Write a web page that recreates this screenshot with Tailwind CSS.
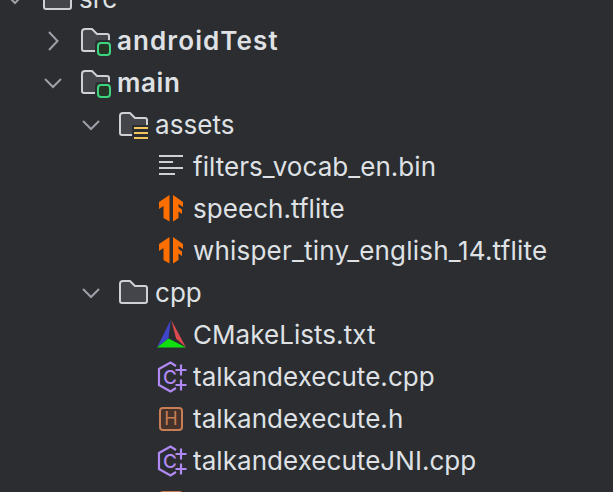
<!DOCTYPE html>
<html lang="en">
<head>
  <meta charset="UTF-8" />
  <title>Project tree</title>
  <script src="https://cdn.jsdelivr.net/npm/@tailwindcss/browser@4"></script>
</head>
<body class="bg-[#2b2d30] h-[492px] overflow-hidden font-['Inter',sans-serif] text-[26px] tracking-[0.05px] text-[#dfe1e5]">

  <div class="-mt-[22px] h-[514px]">

    <!-- src -->
    <div class="flex items-center h-[42px] pl-[3px]">
      <svg class="w-6 h-6 shrink-0 mr-[14px]" viewBox="0 0 24 24" fill="none" stroke="#9da0a8" stroke-width="2"><path d="M4 8l8 8 8-8"/></svg>
      <svg class="w-8 h-8 shrink-0" viewBox="0 0 32 32" fill="#43454a" stroke="#ced0d6" stroke-width="2" stroke-linejoin="round"><path d="M3 7a3 3 0 0 1 3-3h7l5 5h10a2 2 0 0 1 2 2v13a2 2 0 0 1-2 2H5a2 2 0 0 1-2-2z"/></svg>
      <span class="ml-[6px] mb-[2px]">src</span>
    </div>

    <!-- androidTest -->
    <div class="flex items-center h-[42px] pl-[41px]">
      <svg class="w-6 h-6 shrink-0 mr-[14px]" viewBox="0 0 24 24" fill="none" stroke="#9da0a8" stroke-width="2"><path d="M8 3l8.500 9L8 21"/></svg>
      <svg class="w-8 h-8 shrink-0" viewBox="0 0 32 32"><path fill="#43454a" stroke="#ced0d6" stroke-width="2" stroke-linejoin="round" d="M3 7a3 3 0 0 1 3-3h7l5 5h10a2 2 0 0 1 2 2v13a2 2 0 0 1-2 2H5a2 2 0 0 1-2-2z"/><rect x="16" y="15" width="17" height="17" rx="4" fill="#2b2d30"/><rect x="19" y="18" width="12" height="12" rx="3" fill="#253627" stroke="#3dd67f" stroke-width="2"/></svg>
      <span class="ml-[6px] mb-[2px] font-semibold tracking-[1.1px]">androidTest</span>
    </div>

    <!-- main -->
    <div class="flex items-center h-[42px] pl-[41px]">
      <svg class="w-6 h-6 shrink-0 mr-[14px]" viewBox="0 0 24 24" fill="none" stroke="#9da0a8" stroke-width="2"><path d="M4 8l8 8 8-8"/></svg>
      <svg class="w-8 h-8 shrink-0" viewBox="0 0 32 32"><path fill="#43454a" stroke="#ced0d6" stroke-width="2" stroke-linejoin="round" d="M3 7a3 3 0 0 1 3-3h7l5 5h10a2 2 0 0 1 2 2v13a2 2 0 0 1-2 2H5a2 2 0 0 1-2-2z"/><rect x="16" y="15" width="17" height="17" rx="4" fill="#2b2d30"/><rect x="19" y="18" width="12" height="12" rx="3" fill="#253627" stroke="#3dd67f" stroke-width="2"/></svg>
      <span class="ml-[6px] mb-[2px] font-semibold tracking-[0.6px]">main</span>
    </div>

    <!-- assets -->
    <div class="flex items-center h-[42px] pl-[79px]">
      <svg class="w-6 h-6 shrink-0 mr-[14px]" viewBox="0 0 24 24" fill="none" stroke="#9da0a8" stroke-width="2"><path d="M4 8l8 8 8-8"/></svg>
      <svg class="w-8 h-8 shrink-0" viewBox="0 0 32 32"><path fill="#43454a" stroke="#ced0d6" stroke-width="2" stroke-linejoin="round" d="M3 7a3 3 0 0 1 3-3h7l5 5h10a2 2 0 0 1 2 2v13a2 2 0 0 1-2 2H5a2 2 0 0 1-2-2z"/><rect x="15" y="16" width="18" height="16" fill="#2b2d30"/><path stroke="#f2c55c" stroke-width="2" d="M17 19h14M17 24h14M17 29h14"/></svg>
      <span class="ml-[6px] mb-[2px]">assets</span>
    </div>

    <!-- filters_vocab_en.bin -->
    <div class="flex items-center h-[42px] pl-[157px]">
      <svg class="w-8 h-8 shrink-0" viewBox="0 0 32 32" stroke="#ced0d6" stroke-width="2"><path d="M2 5h24M2 11h14M2 17h24M2 23h16"/></svg>
      <span class="ml-[4px] mb-[2px]">filters_vocab_en.bin</span>
    </div>

    <!-- speech.tflite -->
    <div class="flex items-center h-[42px] pl-[157px]">
      <svg class="w-8 h-8 shrink-0" viewBox="0 0 32 32" fill="#ff6f00"><path d="M12.500 2L2 9v7l4.500-3v12l6 3.500z"/><path d="M16 2l10 7v5l-4.500-3v3l3.500 2.500v4.500l-3.500-2.500V25L16 28.500z"/></svg>
      <span class="ml-[4px] mb-[2px]">speech.tflite</span>
    </div>

    <!-- whisper_tiny_english_14.tflite -->
    <div class="flex items-center h-[42px] pl-[157px]">
      <svg class="w-8 h-8 shrink-0" viewBox="0 0 32 32" fill="#ff6f00"><path d="M12.500 2L2 9v7l4.500-3v12l6 3.500z"/><path d="M16 2l10 7v5l-4.500-3v3l3.500 2.500v4.500l-3.500-2.500V25L16 28.500z"/></svg>
      <span class="ml-[4px] mb-[2px] tracking-[0.2px]">whisper_tiny_english_14.tflite</span>
    </div>

    <!-- cpp -->
    <div class="flex items-center h-[42px] pl-[79px]">
      <svg class="w-6 h-6 shrink-0 mr-[14px]" viewBox="0 0 24 24" fill="none" stroke="#9da0a8" stroke-width="2"><path d="M4 8l8 8 8-8"/></svg>
      <svg class="w-8 h-8 shrink-0" viewBox="0 0 32 32" fill="#43454a" stroke="#ced0d6" stroke-width="2" stroke-linejoin="round"><path d="M3 7a3 3 0 0 1 3-3h7l5 5h10a2 2 0 0 1 2 2v13a2 2 0 0 1-2 2H5a2 2 0 0 1-2-2z"/></svg>
      <span class="ml-[6px] mb-[2px]">cpp</span>
    </div>

    <!-- CMakeLists.txt -->
    <div class="flex items-center h-[42px] pl-[157px]">
      <svg class="w-8 h-8 shrink-0" viewBox="0 0 32 32"><path fill="#3f45c8" d="M13.700 1L0 28.500l11.500-9z"/><path fill="#dc4a50" d="M14.300 1L29 28.500l-10-9z"/><path fill="#10e010" d="M0 28.500l11.500-9L29 28.500z"/></svg>
      <span class="ml-[4px] mb-[2px]">CMakeLists.txt</span>
    </div>

    <!-- talkandexecute.cpp -->
    <div class="flex items-center h-[42px] pl-[157px]">
      <svg class="w-8 h-8 shrink-0" viewBox="0 0 32 32" fill="none" stroke="#b189f5" stroke-width="2.200"><path d="M19 5l-5.500-3.500L2 8v16l11.500 6.500 5.500-3.500"/><text x="6" y="22.500" font-size="19" font-weight="500" fill="#b189f5" stroke="none" font-family="Inter">C</text><path d="M18.500 9h11M24 3.500v11M18.500 24h11M24 18.500v11"/></svg>
      <span class="ml-[4px] mb-[2px]">talkandexecute.cpp</span>
    </div>

    <!-- talkandexecute.h -->
    <div class="flex items-center h-[42px] pl-[157px]">
      <div class="w-8 h-8 shrink-0 flex items-center">
        <div class="ml-[2px] w-[24px] h-[24px] rounded-[4px] border-2 border-[#c77d55] bg-[#45322b] text-[#c77d55] text-[18px] leading-none flex items-center justify-center">H</div>
      </div>
      <span class="ml-[4px] mb-[2px]">talkandexecute.h</span>
    </div>

    <!-- talkandexecuteJNI.cpp -->
    <div class="flex items-center h-[42px] pl-[157px]">
      <svg class="w-8 h-8 shrink-0" viewBox="0 0 32 32" fill="none" stroke="#b189f5" stroke-width="2.200"><path d="M19 5l-5.500-3.500L2 8v16l11.500 6.500 5.500-3.500"/><text x="6" y="22.500" font-size="19" font-weight="500" fill="#b189f5" stroke="none" font-family="Inter">C</text><path d="M18.500 9h11M24 3.500v11M18.500 24h11M24 18.500v11"/></svg>
      <span class="ml-[4px] mb-[2px]">talkandexecuteJNI.cpp</span>
    </div>

    <!-- next file, cut off by the window -->
    <div class="flex items-center h-[42px] pl-[157px]">
      <div class="w-8 h-8 shrink-0 flex items-center">
        <div class="ml-[2px] w-[24px] h-[24px] rounded-[4px] border-2 border-[#c77d55] bg-[#45322b]"></div>
      </div>
    </div>

  </div>
</body>
</html>
